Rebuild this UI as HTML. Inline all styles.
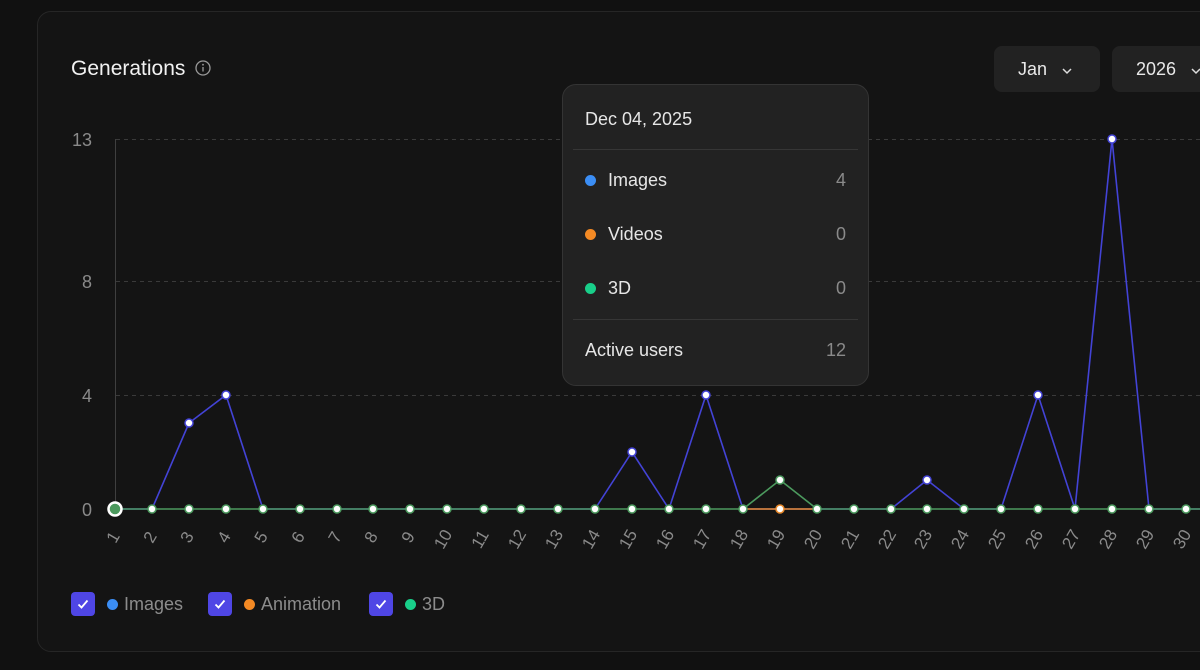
<!DOCTYPE html>
<html><head><meta charset="utf-8"><style>
html,body{margin:0;padding:0;background:#111111;width:1200px;height:670px;overflow:hidden;font-family:"Liberation Sans",sans-serif}
.card{position:absolute;left:37px;top:11px;width:1200px;height:639px;border:1px solid #262626;border-radius:14px;background:#141414}
.title{position:absolute;left:71px;top:57px;color:#f2f2f2;font-size:21px}
.dd{position:absolute;top:46px;height:46px;background:#222;border-radius:8px;color:#e8e8e8;font-size:18px;line-height:46px}
.tip{position:absolute;left:562px;top:84px;width:305px;height:300px;background:#222;border:1px solid #343434;border-radius:14px;color:#e6e6e6;font-size:18px}
.tip .row{position:absolute;left:22px;right:22px}
.tip .v{position:absolute;right:0;color:#8a8a8a}
.dot{display:inline-block;width:11px;height:11px;border-radius:50%;margin-right:12px;vertical-align:0}
.hr{position:absolute;left:10px;right:10px;height:1px;background:#363636}
.leg{position:absolute;top:592px;font-size:18px;color:#8c8c8c;line-height:24px}
.cb{display:inline-block;width:24px;height:24px;border-radius:4px;background:#4f46e5;vertical-align:top;margin-right:12px;position:relative}
</style></head><body>
<div class="card"></div>
<div class="title">Generations <svg width="18" height="18" viewBox="0 0 18 18" style="vertical-align:-2px;margin-left:3px"><circle cx="9" cy="9" r="7" fill="none" stroke="#9a9a9a" stroke-width="1.3"/><line x1="9" y1="8" x2="9" y2="12.5" stroke="#9a9a9a" stroke-width="1.3"/><circle cx="9" cy="5.7" r="0.9" fill="#9a9a9a"/></svg></div>
<div class="dd" style="left:994px;width:106px"><span style="margin-left:24px">Jan</span><svg width="12" height="8" style="margin-left:14px" viewBox="0 0 12 8"><path d="M2 2l4 4 4-4" fill="none" stroke="#ddd" stroke-width="1.5"/></svg></div>
<div class="dd" style="left:1112px;width:120px"><span style="margin-left:24px">2026</span><svg width="12" height="8" style="margin-left:14px" viewBox="0 0 12 8"><path d="M2 2l4 4 4-4" fill="none" stroke="#ddd" stroke-width="1.5"/></svg></div>
<svg style="position:absolute;left:0;top:0" width="1200" height="670">
<g stroke="#3a3a3a" stroke-dasharray="4 4" stroke-width="1"><line x1="116" y1="139.5" x2="1200" y2="139.5"/><line x1="116" y1="281.5" x2="1200" y2="281.5"/><line x1="116" y1="395.5" x2="1200" y2="395.5"/></g>
<line x1="115.5" y1="139" x2="115.5" y2="509" stroke="#3f3f3f"/>
<g fill="#8a8a8a" font-size="18" text-anchor="end"><text x="92" y="146">13</text><text x="92" y="288">8</text><text x="92" y="402">4</text><text x="92" y="516">0</text></g>
<polyline fill="none" stroke="#4343d6" stroke-width="1.6" points="115,509 152,509 189,423 226,395 263,509 300,509 337,509 373,509 410,509 447,509 484,509 521,509 558,509 595,509 632,452 669,509 706,395 743,509 780,509 817,509 854,509 891,509 927,480 964,509 1001,509 1038,395 1075,509 1112,139 1149,509 1186,509 1223,509"/>
<line x1="743" y1="509" x2="817" y2="509" stroke="#e8892a" stroke-width="1.6"/>
<polyline fill="none" stroke="#4c9a5e" stroke-width="1.6" points="115,509 743,509 780,480 817,509 1223,509"/>
<g fill="#fff" stroke="#4343d6" stroke-width="1.5"><circle cx="189" cy="423" r="4"/><circle cx="226" cy="395" r="4"/><circle cx="632" cy="452" r="4"/><circle cx="706" cy="395" r="4"/><circle cx="927" cy="480" r="4"/><circle cx="1038" cy="395" r="4"/><circle cx="1112" cy="139" r="4"/></g>
<circle cx="780" cy="509" r="4" fill="#fff" stroke="#e8892a" stroke-width="1.5"/>
<g fill="#fff" stroke="#4c9a5e" stroke-width="1.5"><circle cx="152" cy="509" r="4"/><circle cx="189" cy="509" r="4"/><circle cx="226" cy="509" r="4"/><circle cx="263" cy="509" r="4"/><circle cx="300" cy="509" r="4"/><circle cx="337" cy="509" r="4"/><circle cx="373" cy="509" r="4"/><circle cx="410" cy="509" r="4"/><circle cx="447" cy="509" r="4"/><circle cx="484" cy="509" r="4"/><circle cx="521" cy="509" r="4"/><circle cx="558" cy="509" r="4"/><circle cx="595" cy="509" r="4"/><circle cx="632" cy="509" r="4"/><circle cx="669" cy="509" r="4"/><circle cx="706" cy="509" r="4"/><circle cx="743" cy="509" r="4"/><circle cx="780" cy="480" r="4"/><circle cx="817" cy="509" r="4"/><circle cx="854" cy="509" r="4"/><circle cx="891" cy="509" r="4"/><circle cx="927" cy="509" r="4"/><circle cx="964" cy="509" r="4"/><circle cx="1001" cy="509" r="4"/><circle cx="1038" cy="509" r="4"/><circle cx="1075" cy="509" r="4"/><circle cx="1112" cy="509" r="4"/><circle cx="1149" cy="509" r="4"/><circle cx="1186" cy="509" r="4"/></g>
<circle cx="115" cy="509" r="6.5" fill="#4c9a5e" stroke="#fff" stroke-width="2.5"/>
<g fill="#8a8a8a" font-size="17" text-anchor="middle">
<text transform="translate(118,540) rotate(-60)">1</text><text transform="translate(155,540) rotate(-60)">2</text><text transform="translate(192,540) rotate(-60)">3</text><text transform="translate(229,540) rotate(-60)">4</text><text transform="translate(266,540) rotate(-60)">5</text><text transform="translate(303,540) rotate(-60)">6</text><text transform="translate(340,540) rotate(-60)">7</text><text transform="translate(376,540) rotate(-60)">8</text><text transform="translate(413,540) rotate(-60)">9</text><text transform="translate(448,542) rotate(-60)">10</text><text transform="translate(485,542) rotate(-60)">11</text><text transform="translate(522,542) rotate(-60)">12</text><text transform="translate(559,542) rotate(-60)">13</text><text transform="translate(596,542) rotate(-60)">14</text><text transform="translate(633,542) rotate(-60)">15</text><text transform="translate(670,542) rotate(-60)">16</text><text transform="translate(707,542) rotate(-60)">17</text><text transform="translate(744,542) rotate(-60)">18</text><text transform="translate(781,542) rotate(-60)">19</text><text transform="translate(818,542) rotate(-60)">20</text><text transform="translate(855,542) rotate(-60)">21</text><text transform="translate(892,542) rotate(-60)">22</text><text transform="translate(928,542) rotate(-60)">23</text><text transform="translate(965,542) rotate(-60)">24</text><text transform="translate(1002,542) rotate(-60)">25</text><text transform="translate(1039,542) rotate(-60)">26</text><text transform="translate(1076,542) rotate(-60)">27</text><text transform="translate(1113,542) rotate(-60)">28</text><text transform="translate(1150,542) rotate(-60)">29</text><text transform="translate(1187,542) rotate(-60)">30</text>
</g>
</svg>
<div class="tip">
<div class="row" style="top:24px">Dec 04, 2025</div>
<div class="hr" style="top:64px"></div>
<div class="row" style="top:85px"><span class="dot" style="background:#3b8ef5"></span>Images<span class="v">4</span></div>
<div class="row" style="top:139px"><span class="dot" style="background:#f48a24"></span>Videos<span class="v">0</span></div>
<div class="row" style="top:193px"><span class="dot" style="background:#19cf8a"></span>3D<span class="v">0</span></div>
<div class="hr" style="top:234px"></div>
<div class="row" style="top:255px">Active users<span class="v">12</span></div>
</div>
<div class="leg" style="left:71px"><span class="cb"><svg width="24" height="24"><path d="M7.5 12.5l3 3 6-7" fill="none" stroke="#fff" stroke-width="1.8"/></svg></span><span class="dot" style="background:#3b8ef5;margin-right:6px"></span>Images</div>
<div class="leg" style="left:208px"><span class="cb"><svg width="24" height="24"><path d="M7.5 12.5l3 3 6-7" fill="none" stroke="#fff" stroke-width="1.8"/></svg></span><span class="dot" style="background:#f48a24;margin-right:6px"></span>Animation</div>
<div class="leg" style="left:369px"><span class="cb"><svg width="24" height="24"><path d="M7.5 12.5l3 3 6-7" fill="none" stroke="#fff" stroke-width="1.8"/></svg></span><span class="dot" style="background:#19cf8a;margin-right:6px"></span>3D</div>
</body></html>
